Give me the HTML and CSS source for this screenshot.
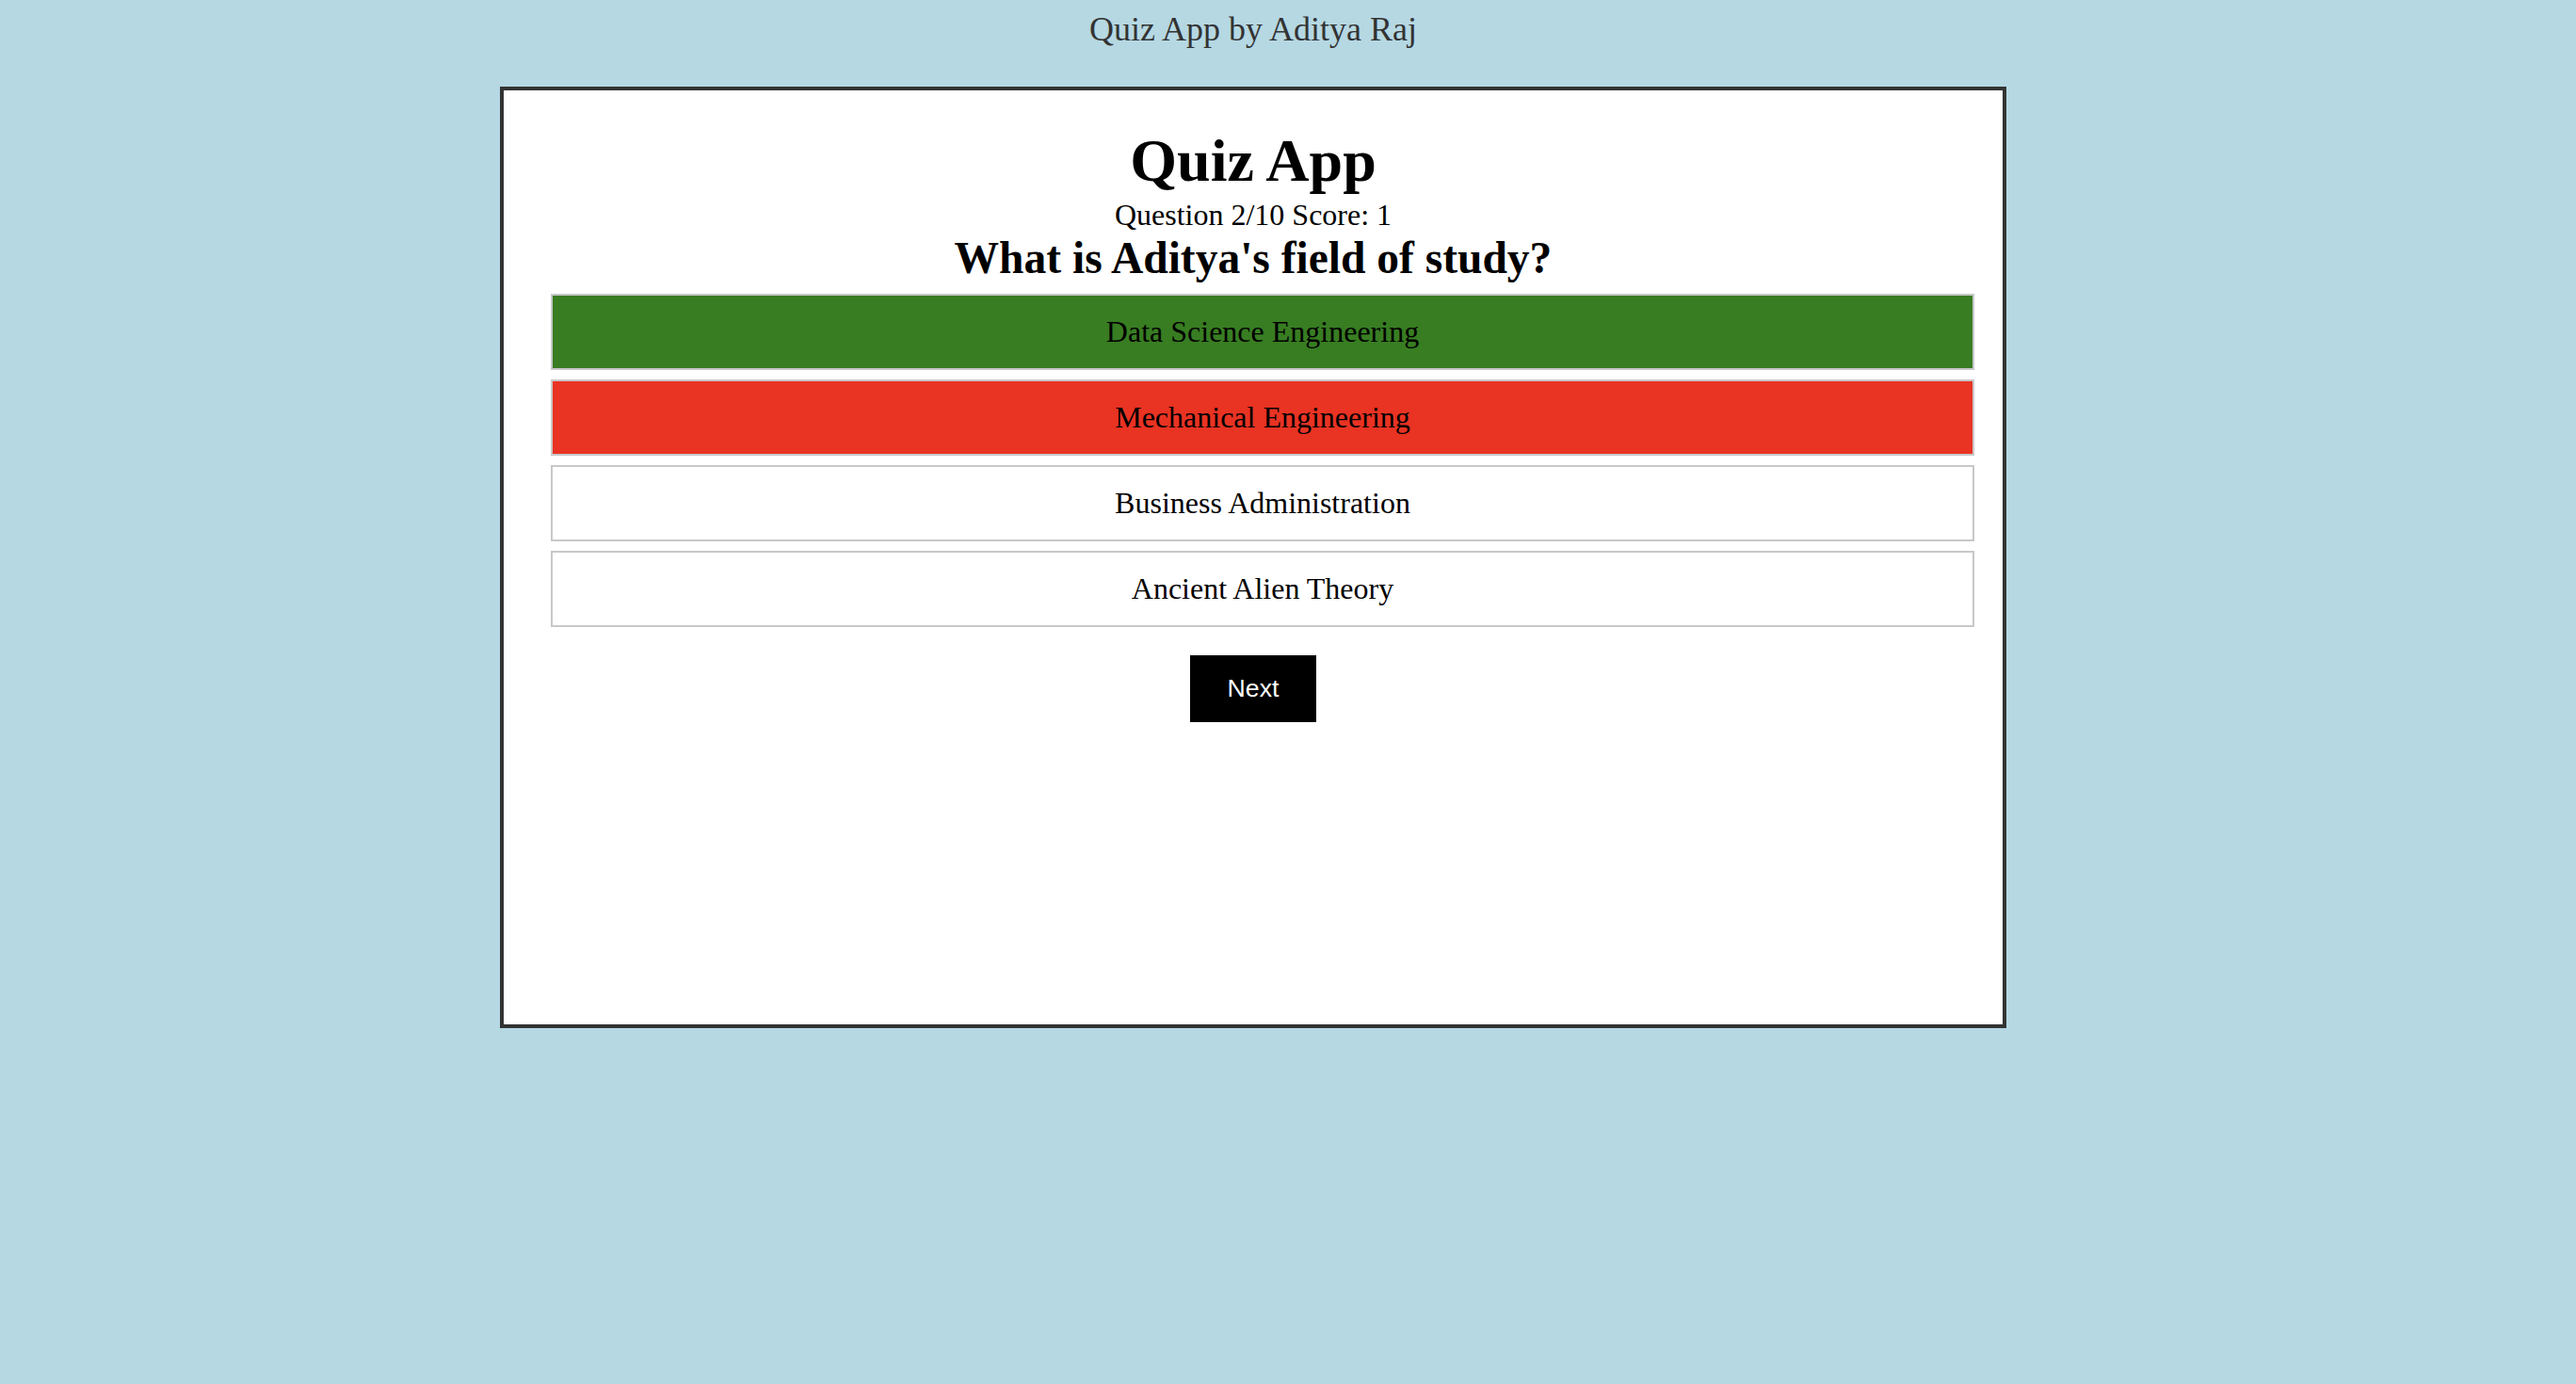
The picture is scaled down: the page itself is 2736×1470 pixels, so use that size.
FILE: index.html
```html
<!DOCTYPE html>
<html lang="en">
<head>
<meta charset="utf-8">
<title>Quiz App</title>
<link rel="stylesheet" href="styles.css">
</head>
<body>
<div class="page">
  <p class="byline">Quiz App by Aditya Raj</p>
  <main class="quiz">
    <h1 class="title">Quiz App</h1>
    <div class="status">Question 2/10 Score: 1</div>
    <h2 class="question">What is Aditya's field of study?</h2>
    <div class="options">
      <div class="option correct">Data Science Engineering</div>
      <div class="option wrong">Mechanical Engineering</div>
      <div class="option">Business Administration</div>
      <div class="option">Ancient Alien Theory</div>
    </div>
    <div class="actions">
      <button class="next" type="button">Next</button>
    </div>
  </main>
</div>
</body>
</html>
```

FILE: styles.css
```css
html, body {
  margin: 0;
  padding: 0;
}

body {
  background: #b5d8e3;
  font-family: "Liberation Serif", "Times New Roman", serif;
  color: #000;
}

.page {
  width: 2662px;
}

.byline {
  margin: 11px 0 0;
  font-size: 36px;
  line-height: 41px;
  text-align: center;
  color: #333;
}

.quiz {
  box-sizing: border-box;
  width: 1600px;
  height: 1000px;
  margin: 40px auto 0;
  padding-top: 43px;
  background: #fff;
  border: 4px solid #333;
}

.title {
  margin: 0;
  font-size: 64px;
  line-height: 64px;
  font-weight: bold;
  text-align: center;
}

.status {
  margin-top: 8px;
  font-size: 32px;
  line-height: 34px;
  text-align: center;
}

.question {
  margin: 2px 0 0;
  font-size: 47.5px;
  line-height: 54px;
  font-weight: bold;
  text-align: center;
}

.options {
  display: flex;
  flex-direction: column;
  gap: 10px;
  width: 1512px;
  margin: 11px 0 0 50px;
}

.option {
  box-sizing: border-box;
  height: 81px;
  display: flex;
  align-items: center;
  justify-content: center;
  border: 2px solid #c8c8c8;
  background: #fff;
  font-size: 32px;
}

.option.correct {
  background: #387d22;
}

.option.wrong {
  background: #e93323;
}

.actions {
  display: flex;
  justify-content: center;
  margin-top: 30px;
}

.next {
  padding: 20px 40px;
  border: none;
  background: #000;
  color: #fff;
  font-family: "Liberation Sans", Arial, sans-serif;
  font-size: 26.67px;
  line-height: 31px;
  cursor: pointer;
}
```
